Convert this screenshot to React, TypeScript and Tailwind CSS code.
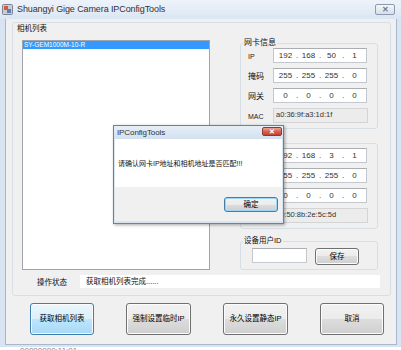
import React from "react";

const btnNormal =
  "border border-[#707070] rounded-[3px] bg-[linear-gradient(#f2f2f2,#ebebeb_50%,#dddddd_50%,#cfcfcf)] shadow-[inset_0_0_0_1px_#fcfcfc] flex items-center justify-center text-[7.5px] text-black";
const btnHot =
  "border border-[#3c7fb1] rounded-[3px] bg-[linear-gradient(#eaf6fd,#d9f0fc_50%,#bee6fd_50%,#a7d9f5)] shadow-[inset_0_0_0_1px_#fcfcfc] flex items-center justify-center text-[7.5px] text-black";

function IpBox({ parts }: { parts: string[] }) {
  return (
    <div className="w-[94px] h-full bg-white border border-[#c3c8cf] border-t-[#abadb3] flex items-center text-[8px] leading-none text-[#333]">
      {parts.map((p, i) => (
        <React.Fragment key={i}>
          <span className="flex-1 text-center">{p}</span>
          {i < 3 && <span className="w-0 flex justify-center">.</span>}
        </React.Fragment>
      ))}
    </div>
  );
}

function MacBox({ text }: { text: string }) {
  return (
    <div className="w-[95px] h-full bg-[#ececec] border border-[#d4d4d4] flex items-start pt-[2px] pl-[2px] text-[7.5px] leading-none text-[#333]">
      {text}
    </div>
  );
}

function Row({ label, small, children }: { label: string; small?: boolean; children: React.ReactNode }) {
  return (
    <div className="flex items-center h-[15px] pl-[7px]">
      <span className={small ? "w-[25px] text-[7px] leading-none text-[#222] pt-[2px]" : "w-[25px] text-[8px] leading-none text-[#111] pt-[3px]"}>
        {label}
      </span>
      {children}
    </div>
  );
}

function NetGroup({
  title,
  ip,
  mask,
  gw,
  mac,
}: {
  title: string;
  ip: string[];
  mask: string[];
  gw: string[];
  mac: string;
}) {
  return (
    <fieldset className="border border-[#d5dfe5] rounded-[3px] pb-[5px]">
      <legend className="ml-[2px] px-[1px] text-[8px] leading-[10px] text-[#111]">{title}</legend>
      <div className="flex flex-col gap-[5px]">
        <Row label="IP" small>
          <IpBox parts={ip} />
        </Row>
        <Row label="掩码">
          <IpBox parts={mask} />
        </Row>
        <Row label="网关">
          <IpBox parts={gw} />
        </Row>
        <Row label="MAC" small>
          <MacBox text={mac} />
        </Row>
      </div>
    </fieldset>
  );
}

export default function App() {
  return (
    <div className="relative w-[401px] h-[350px] overflow-hidden bg-[#d8e4f1] flex flex-col font-['Liberation_Sans','Noto_Sans_CJK_SC',sans-serif] select-none">
      {/* Title bar */}
      <div className="h-[19px] shrink-0 flex items-center pl-[2px] pr-[6px] bg-[linear-gradient(#eef3fa,#dbe6f3)]">
        <svg width="11" height="11" viewBox="0 0 11 11">
          <rect x="0.5" y="0.5" width="10" height="10" rx="1" fill="#c9ced6" stroke="#7d8590" />
          <rect x="2" y="2" width="4" height="4" fill="#d9573f" />
          <rect x="5" y="5" width="4" height="4" fill="#5a7fb5" />
        </svg>
        <span className="ml-[4px] text-[9px] leading-none text-[#333] tracking-[-0.1px]">
          Shuangyi Gige Camera IPConfigTools
        </span>
        <div className="ml-auto w-[20px] h-[11px] rounded-[2px] border border-[#8c9aae] bg-[linear-gradient(#f4f7fb,#d6dfea)] flex items-center justify-center text-[8px] leading-none text-[#6d7a8c] font-bold">
          ✕
        </div>
      </div>

      {/* Body */}
      <div className="flex h-[326px] shrink-0">
        <div className="w-[5px] bg-[#d8e4f1]" />
        <div className="w-[392px] bg-[#f0f0f0] border-l border-r border-b border-[#a8b8cc] flex flex-col">
          {/* Big group */}
          <div className="mt-[3px] ml-[6px] w-[379px] h-[274px] border border-[#d5dfe5] rounded-[3px] flex flex-col">
            <div className="flex h-[249px]">
              {/* Left column */}
              <div className="w-[197px] flex flex-col">
                <div className="mt-[1px] h-[10px] pl-[4px] text-[7.5px] leading-[10px] text-[#111]">相机列表</div>
                <div className="mt-[6px] ml-[9px] w-[188px] h-[230px] bg-white border border-[#a0a5ad]">
                  <div className="h-[8px] bg-[#3399ff] text-white text-[6.5px] leading-[8px] pl-[1px]">
                    SY-GEM1000M-10-R
                  </div>
                </div>
              </div>
              {/* Right column */}
              <div className="ml-[30px] w-[138px] mt-[15px] flex flex-col">
                <NetGroup
                  title="网卡信息"
                  ip={["192", "168", "50", "1"]}
                  mask={["255", "255", "255", "0"]}
                  gw={["0", "0", "0", "0"]}
                  mac="a0:36:9f:a3:1d:1f"
                />
                <div className="mt-[9px]">
                  <NetGroup
                    title="相机信息"
                    ip={["192", "168", "3", "1"]}
                    mask={["255", "255", "255", "0"]}
                    gw={["0", "0", "0", "0"]}
                    mac="00:50:8b:2e:5c:5d"
                  />
                </div>
                <fieldset className="mt-[7px] border border-[#d5dfe5] rounded-[3px] pb-[4px]">
                  <legend className="ml-[2px] px-[1px] text-[7.5px] leading-[10px] text-[#111]">设备用户ID</legend>
                  <div className="mt-[2px] flex items-start pl-[11px]">
                    <div className="w-[55px] h-[15px] bg-white border border-[#c3c8cf] border-t-[#abadb3]" />
                    <div className={"ml-[8px] w-[44px] h-[17px] " + btnNormal}>保存</div>
                  </div>
                </fieldset>
              </div>
            </div>
            {/* Status row */}
            <div className="mt-[3px] h-[13px] flex items-center">
              <span className="pl-[24px] w-[67px] text-[7.5px] leading-none text-[#111] pt-[3px]">操作状态</span>
              <div className="w-[300px] h-full bg-white flex items-center pl-[6px] text-[7.5px] leading-none text-[#111]">
                获取相机列表完成......
              </div>
            </div>
          </div>

          {/* Buttons */}
          <div className="mt-[7px] pl-[24px] flex gap-[32px]">
            <div className={"w-[64px] h-[32px] " + btnHot}>获取相机列表</div>
            <div className={"w-[65px] h-[32px] " + btnNormal}>强制设置临时IP</div>
            <div className={"w-[65px] h-[32px] " + btnNormal}>永久设置静态IP</div>
            <div className={"w-[64px] h-[32px] " + btnNormal}>取消</div>
          </div>
        </div>
        <div className="w-[4px] bg-[#d8e4f1]" />
      </div>
      <div className="h-[2px] shrink-0 bg-[#d8e4f1]" />
      <div className="h-[3px] shrink-0 bg-white overflow-hidden">
        <div className="flex gap-[28px] pl-[20px] text-[8px] leading-[8px] text-[#888]">
          <span>00000000:11:01</span>
          <span>……………</span>
          <span>……</span>
        </div>
      </div>

      {/* Message dialog */}
      <div className="absolute left-[113px] top-[125px] w-[171px] h-[99px] border border-[#6e7f96] bg-[#d9e4f1] flex flex-col shadow-[1px_1px_3px_rgba(0,0,0,0.35)]">
        <div className="h-[13px] shrink-0 flex items-start pl-[3px] pr-[1px] bg-[linear-gradient(#e6eef8,#d3e0ef)]">
          <span className="mt-[3px] text-[8px] leading-none text-[#333] tracking-[-0.1px]">IPConfigTools</span>
          <div className="ml-auto mt-[1px] w-[20px] h-[9px] rounded-[2px] border border-[#8d3b31] bg-[linear-gradient(#eba596,#d4634f_50%,#c2422e)] flex items-center justify-center text-[7px] leading-none text-white font-bold">
            ✕
          </div>
        </div>
        <div className="mx-[1px] h-[48px] shrink-0 bg-white flex items-center pl-[3px] text-[7px] leading-none text-[#111]">
          请确认网卡IP地址和相机地址是否匹配!!!
        </div>
        <div className="mx-[1px] h-[34px] shrink-0 bg-[#f0f0f0] flex justify-end items-start pt-[10px] pr-[4px]">
          <div className="w-[54px] h-[15px] border border-[#3c7fb1] rounded-[3px] bg-[linear-gradient(#f2f2f2,#ebebeb_50%,#dddddd_50%,#cfcfcf)] shadow-[inset_0_0_0_1px_#9fd5f5] flex items-center justify-center text-[7.5px] text-black">
            确定
          </div>
        </div>
      </div>
    </div>
  );
}
